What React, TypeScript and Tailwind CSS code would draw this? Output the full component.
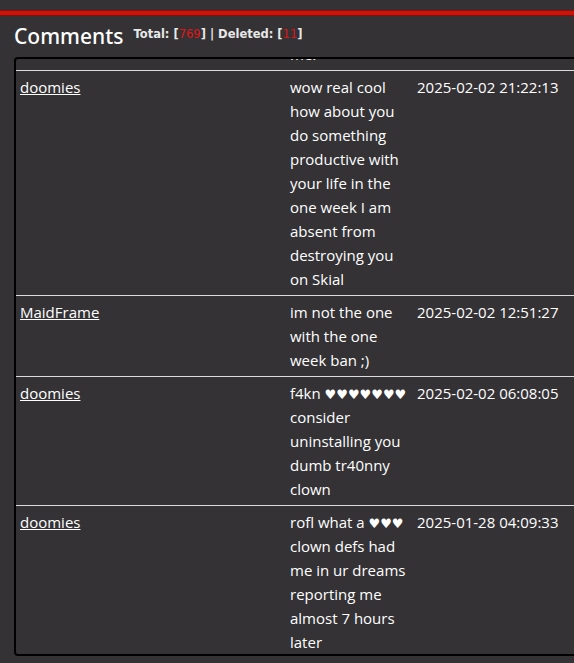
import React from "react";

type Row = { name: string; lines: React.ReactNode[]; date: string };

const H = ({ n }: { n: number }) => (
  <span className="text-[13px] leading-none" style={{ fontFamily: '"DejaVu Sans", sans-serif' }}>
    {"♥".repeat(n)}
  </span>
);

const rows: Row[] = [
  {
    name: "doomies",
    lines: [
      "wow real cool",
      "how about you",
      "do something",
      "productive with",
      "your life in the",
      "one week I am",
      "absent from",
      "destroying you",
      "on Skial",
    ],
    date: "2025-02-02 21:22:13",
  },
  {
    name: "MaidFrame",
    lines: ["im not the one", "with the one", "week ban ;)"],
    date: "2025-02-02 12:51:27",
  },
  {
    name: "doomies",
    lines: [
      <>
        f4kn <H n={7} />
      </>,
      "consider",
      "uninstalling you",
      "dumb tr40nny",
      "clown",
    ],
    date: "2025-02-02 06:08:05",
  },
  {
    name: "doomies",
    lines: [
      <>
        rofl what a <H n={3} />
      </>,
      "clown defs had",
      "me in ur dreams",
      "reporting me",
      "almost 7 hours",
      "later",
    ],
    date: "2025-01-28 04:09:33",
  },
];

function CommentRow({ row }: { row: Row }) {
  return (
    <div className="flex border-t border-[#dcdcdc] py-[4px] leading-[24px]">
      <div className="w-[270px] shrink-0 pl-[4px]">
        <a className="underline text-white">{row.name}</a>
      </div>
      <div className="w-[127px] shrink-0 pl-[4px]">
        {row.lines.map((l, i) => (
          <div key={i} className="h-[24px] whitespace-nowrap">
            {l}
          </div>
        ))}
      </div>
      <div className="pl-[4px] whitespace-nowrap">{row.date}</div>
    </div>
  );
}

export default function App() {
  return (
    <div
      className="w-[574px] h-[663px] overflow-hidden bg-[#343235] text-white"
      style={{ fontFamily: '"Open Sans", "Noto Sans", sans-serif' }}
    >
      <div className="h-[10px]" />
      <div className="h-[6px] border-y border-[#8e0b0b] bg-[#c91508]" />
      <div className="flex items-start pl-[14px] pt-[6px] h-[41px]">
        <h2
          className="text-[21px] leading-[28px] font-medium text-white"
          style={{ fontFamily: '"Noto Sans", sans-serif' }}
        >
          Comments
        </h2>
        <div
          className="ml-[10px] mt-[4px] text-[11.5px] leading-[16px] font-bold text-[#e8e8e8] whitespace-nowrap"
          style={{ fontFamily: '"DejaVu Sans", sans-serif' }}
        >
          Total: [<span className="text-[#e01414] font-normal">769</span>] | Deleted: [
          <span className="text-[#e01414] font-normal">11</span>]
        </div>
      </div>
      <div className="ml-[14px] w-[600px] h-[599px] border-2 border-black rounded-[4px] overflow-hidden text-[15px]">
        <div className="mt-[-21px]">
          <div className="flex py-[4px] leading-[24px]">
            <div className="w-[270px] shrink-0" />
            <div className="w-[127px] shrink-0 pl-[4px]">
              <div>me!</div>
            </div>
          </div>
          {rows.map((r, i) => (
            <CommentRow key={i} row={r} />
          ))}
        </div>
      </div>
    </div>
  );
}
